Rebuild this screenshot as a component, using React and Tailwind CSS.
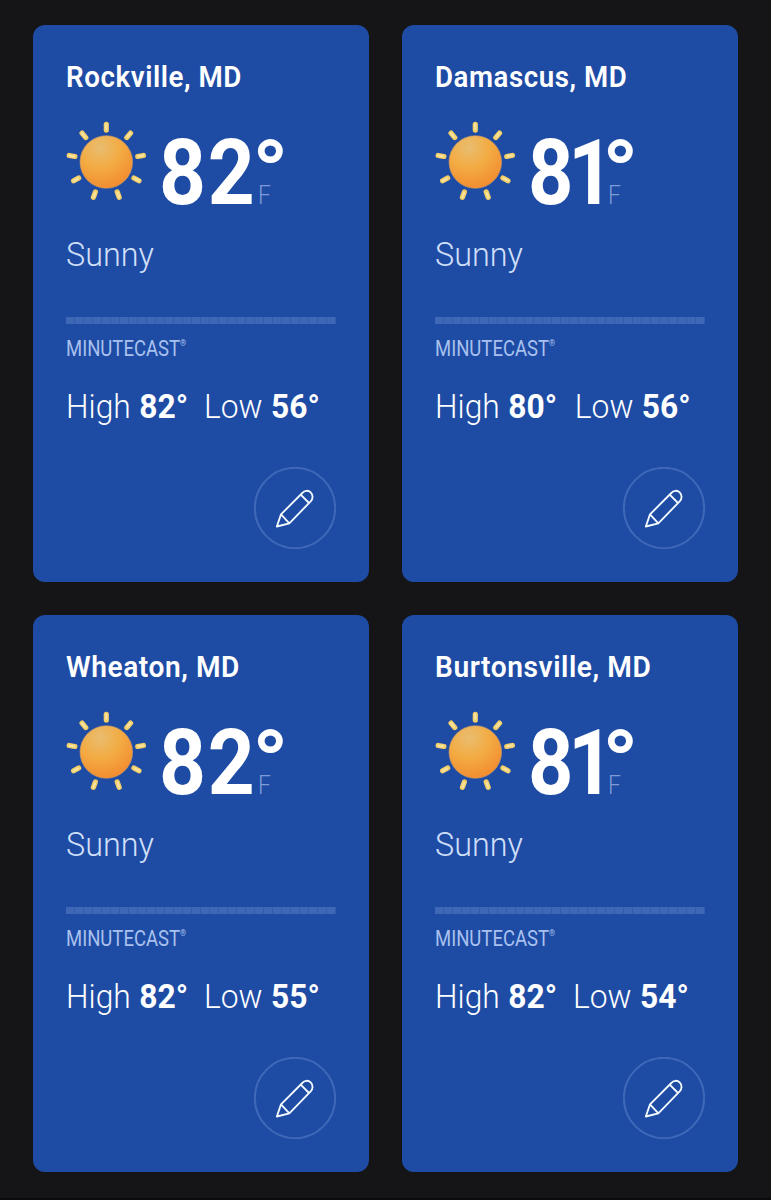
const locations = [
  { name: "Rockville, MD", temp: 82, high: 82, low: 56, nameScale: "scale-x-[0.925]" },
  { name: "Damascus, MD", temp: 81, high: 80, low: 56, nameScale: "scale-x-[0.922]" },
  { name: "Wheaton, MD", temp: 82, high: 82, low: 55, nameScale: "scale-x-[0.937]" },
  { name: "Burtonsville, MD", temp: 81, high: 82, low: 54, nameScale: "scale-x-[0.938]" },
];

const rays = [0, 40, 80, 120, 160, 200, 240, 280, 320];
const minutes = Array.from({ length: 30 }, (_, i) => i);

function SunIcon() {
  return (
    <svg className="-ml-px h-[82px] w-[82px] shrink-0" viewBox="-41.3 -41 82 82">
      <defs>
        <radialGradient id="sun" cx="0.38" cy="0.22" r="0.8">
          <stop offset="0" stopColor="#e9bd70" />
          <stop offset="0.5" stopColor="#f3ab42" />
          <stop offset="1" stopColor="#f28c30" />
        </radialGradient>
      </defs>
      {rays.map((angle) => (
        <g key={angle} transform={`rotate(${angle})`}>
          <rect x="-2.6" y="-40.3" width="5.2" height="11" rx="2.6" fill="#f3cf68" />
          <rect x="-1.2" y="-38.8" width="2.2" height="7" rx="1.1" fill="#f8e2a0" />
        </g>
      ))}
      <circle r="26.3" fill="url(#sun)" stroke="#c49a6a" strokeWidth="0.6" />
    </svg>
  );
}

function PencilIcon() {
  return (
    <svg className="size-full" viewBox="43 36 246 246" fill="none">
      <circle cx="166" cy="159" r="120.5" stroke="#3f68b8" strokeWidth="6" />
      <g stroke="#f4fbff" strokeWidth="5.5" strokeLinejoin="round">
        <path d="M111.500 214.500 124 178 188 114C194 106 206 105 213 112C221 120 220 132 213 139L149 205Z" />
        <path d="M124 178 149 205M183 119 208 144" />
      </g>
    </svg>
  );
}

function Temperature({ value }) {
  const endsInOne = value % 10 === 1;

  return (
    <div className="ml-[12px] flex pt-[3px] text-[90px] leading-[100px] font-bold text-white">
      <span
        className={
          endsInOne
            ? "w-[73.5px] origin-left scale-x-[0.88] tracking-[-6px]"
            : "w-[92.5px] origin-left scale-x-[0.91] tracking-[2px]"
        }
      >
        {value}
      </span>
      <span className="relative">
        <span className="inline-block origin-left scale-x-105">°</span>
        <span className="absolute top-[53px] left-[6.5px] origin-left scale-x-[0.88] text-[26px] leading-[36px] font-[350] text-[#7f9cd8]">
          F
        </span>
      </span>
    </div>
  );
}

function LocationCard({ location }) {
  const { name, temp, high, low, nameScale } = location;

  return (
    <div className="flex h-[557px] flex-col rounded-xl bg-[#1e4ca5] px-[33px] pt-8 pb-[33px]">
      <h2
        className={`origin-left text-[30px] leading-10 font-semibold tracking-[0.6px] whitespace-nowrap text-white ${nameScale}`}
      >
        {name}
      </h2>
      <div className="mt-[24px] flex h-[100px]">
        <SunIcon />
        <Temperature value={temp} />
      </div>
      <p className="mt-[14px] origin-left scale-x-[0.98] text-[33px] leading-10 font-[350] text-[#cfdff8]">
        Sunny
      </p>
      <div className="mt-[42px] flex h-[7px] bg-[#335cae]">
        {minutes.map((minute) => (
          <span key={minute} className="mr-px flex-1 bg-[#3e67b5]" />
        ))}
      </div>
      <p className="mt-[13px] flex origin-left scale-x-[0.86] text-[21.5px] leading-6 font-normal text-[#a9c1ee]">
        <span>MINUTECAST</span>
        <span className="text-[9px] leading-[13px]">®</span>
      </p>
      <p className="mt-[25px] flex origin-left scale-x-[0.935] text-[34px] leading-10 font-[350] whitespace-nowrap text-white">
        <span>High</span>
        <span className="ml-[9px] font-bold">{high}°</span>
        <span className={high === 80 ? "ml-[19px]" : "ml-[17px]"}>Low</span>
        <span className="ml-[9px] font-bold">{low}°</span>
      </p>
      <button type="button" aria-label="Edit" className="mt-auto size-[82px] self-end">
        <PencilIcon />
      </button>
    </div>
  );
}

export default function App() {
  return (
    <div className="h-[1200px] w-[771px] border-b-2 border-[#0c0b0c] bg-[#151517] px-[33px] pt-[25px] font-[Roboto,sans-serif]">
      <div className="grid grid-cols-2 gap-[33px]">
        {locations.map((location) => (
          <LocationCard key={location.name} location={location} />
        ))}
      </div>
    </div>
  );
}
